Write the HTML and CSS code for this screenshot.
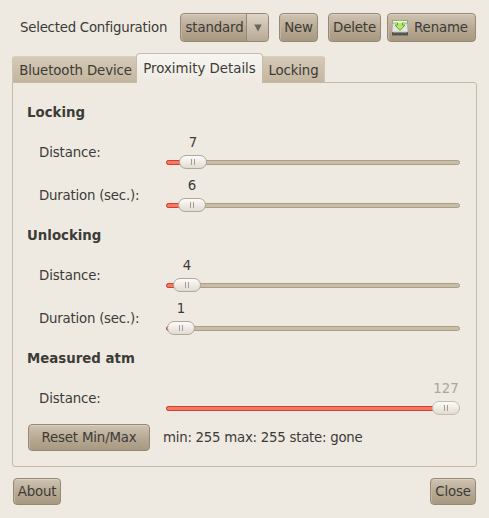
FILE: index.html
```html
<!DOCTYPE html>
<html lang="en">
<head>
<meta charset="utf-8">
<title>Proximity Details</title>
<link rel="stylesheet" href="styles.css">
</head>
<body>
<div class="window">
  <header class="toolbar">
    <span class="toolbar-label">Selected Configuration</span>
    <button class="btn combo"><span class="combo-text">standard</span><span class="combo-arrow"><svg width="8" height="8" viewBox="0 0 8 8"><path d="M0.3 0.5H7.7L4 7.5Z" fill="#6b6557"/></svg></span></button>
    <button class="btn new">New</button>
    <button class="btn delete">Delete</button>
    <button class="btn rename">
      <svg width="16" height="16" viewBox="0 0 16 16">
        <path d="M1 1H15L16 12H0Z" fill="#e4e7e1" stroke="#a9aaa5" stroke-width=".6"/>
        <path d="M0 12H16V15.5H0Z" fill="#55554f"/>
        <path d="M1 12.5H15" stroke="#8b8d88"/>
        <path d="M.5 .5H15.5V3H.5Z" fill="#f4ffe5" stroke="#6d9a3d" stroke-width=".7"/>
        <path d="M5.5 2.5H10.5V5H13L8 10.5L3 5H5.5Z" fill="#b5e869" stroke="#62a72a"/>
        <path d="M5.5 .8H10.5V3H5.5Z" fill="#e4f8c8"/>
      </svg>
      <span>Rename</span>
    </button>
  </header>

  <nav class="tabs">
    <div class="tab first">Bluetooth Device</div>
    <div class="tab active">Proximity Details</div>
    <div class="tab last">Locking</div>
  </nav>

  <main class="panel">
    <h2 class="h-lock">Locking</h2>
    <div class="row"><span class="label">Distance:</span>
      <div class="scale" style="--x:13px"><span class="value">7</span><div class="track"><i class="fill"></i><i class="thumb"></i></div></div></div>
    <div class="row"><span class="label duration">Duration (sec.):</span>
      <div class="scale" style="--x:12px"><span class="value">6</span><div class="track"><i class="fill"></i><i class="thumb"></i></div></div></div>
    <h2 class="h-unlock">Unlocking</h2>
    <div class="row"><span class="label">Distance:</span>
      <div class="scale" style="--x:7px"><span class="value">4</span><div class="track"><i class="fill"></i><i class="thumb"></i></div></div></div>
    <div class="row"><span class="label duration">Duration (sec.):</span>
      <div class="scale" style="--x:1px"><span class="value">1</span><div class="track"><i class="fill"></i><i class="thumb"></i></div></div></div>
    <h2 class="h-measured">Measured atm</h2>
    <div class="row"><span class="label">Distance:</span>
      <div class="scale disabled" style="--x:266px"><span class="value">127</span><div class="track"><i class="fill"></i><i class="thumb"></i></div></div></div>
    <div class="reset-row"><button class="btn reset">Reset Min/Max</button><span class="status">min: 255 max: 255 state: gone</span></div>
  </main>

  <footer class="footer">
    <button class="btn about">About</button>
    <button class="btn close">Close</button>
  </footer>
</div>
</body>
</html>
```
FILE: styles.css
```css
* { box-sizing: border-box; }
body {
  margin: 0;
  background: #eeeae2;
  color: #3c3b37;
  font: 13.33px/17px "DejaVu Sans", sans-serif;
}
.window {
  width: 489px;
  height: 518px;
  padding: 13px 12px;
  display: flex;
  flex-direction: column;
  overflow: hidden;
}
.toolbar { display: flex; height: 29px; align-items: center; padding-left: 8px; white-space: nowrap; }
.toolbar-label { width: 160px; letter-spacing: -0.24px; }
.btn {
  height: 29px;
  padding: 0;
  border: 1px solid #958875;
  border-radius: 4px;
  background: linear-gradient(#cfc3b3, #b9aa95 50%, #a79880);
  box-shadow: inset 0 1px #dbd1c3, inset 1px 0 #c3b6a3;
  color: #3c3b37;
  font: inherit;
  letter-spacing: -0.15px;
  white-space: nowrap;
  display: flex;
  align-items: center;
  justify-content: center;
}
.combo { width: 89px; margin-right: 10px; overflow: hidden; }
.combo-text { flex: 1; padding-left: 2px; }
.combo-arrow {
  width: 22px;
  height: 27px;
  border-left: 1px solid #958875;
  display: flex;
  align-items: center;
  justify-content: center;
  background: linear-gradient(#ded5c8, #b7a994);
}
.new { width: 39px; margin-right: 10px; }
.delete { width: 53px; margin-right: 6px; }
.rename { width: 89px; gap: 6px; padding-right: 3px; }

.tabs { display: flex; height: 30px; margin-top: 11px; align-items: flex-end; position: relative; z-index: 1; white-space: nowrap; }
.tab {
  height: 26px;
  margin-bottom: 1px;
  background: linear-gradient(#d5cab7, #c4b69e);
  border-top: 1px solid #d8cfbf;
  line-height: 27px;
  text-align: center;
}
.tab.first { width: 124px; padding-left: 2px; border-left: 1px solid #cfc5b4; border-radius: 3px 0 0; letter-spacing: -0.12px; }
.tab.active {
  width: 127px;
  height: 30px;
  margin-bottom: 0;
  border: 1px solid #c7bcaa;
  border-bottom: 0;
  border-radius: 4px 4px 0 0;
  background: linear-gradient(#f7f5f1, #eeeae2);
  line-height: 29px;
}
.tab.last { width: 62px; border-right: 1px solid #cfc5b4; border-radius: 0 3px 0 0; letter-spacing: -0.15px; }

.panel {
  height: 385px;
  margin-top: -1px;
  padding: 11px 16px 0 14px;
  border: 1px solid #c5baa8;
  border-radius: 0 3px 3px 3px;
}
h2 { height: 37px; margin: 0; font-size: 13.33px; line-height: 37px; }
.row { display: flex; height: 43px; }
.label { width: 139px; padding-left: 12px; line-height: 43px; letter-spacing: -0.12px; white-space: nowrap; }
.duration { letter-spacing: -0.22px; }
.scale { width: 294px; padding-top: 3px; }
.value { display: block; width: 28px; margin-left: var(--x); text-align: center; line-height: 17px; }
.track {
  height: 5px;
  margin-top: 9px;
  border: 1px solid #a99f87;
  border-radius: 3px;
  background: #c9bda5;
  position: relative;
}
.fill {
  position: absolute;
  left: -1px;
  top: -1px;
  width: calc(var(--x) + 4px);
  height: 5px;
  border: 1px solid #c54436;
  border-radius: 3px 0 0 3px;
  background: #fa7661;
}
.thumb {
  position: absolute;
  left: calc(var(--x) - 1px);
  top: -6px;
  width: 28px;
  height: 14px;
  border: 1px solid #b0a899;
  border-radius: 7px;
  background: linear-gradient(90deg, #a39d91 1px, transparent 1px 3px, #a39d91 3px) center 3px / 4px 6px no-repeat, linear-gradient(#fcfbf9, #e1dcd2);
}
.disabled .value { color: #aaa69d; }
.disabled .thumb { border-color: #c5beb1; }
.reset-row { display: flex; align-items: center; height: 27px; margin: 4px 0 0 1px; white-space: nowrap; }
.reset-row .btn, .footer .btn { height: 27px; }
.reset { width: 122px; margin-right: 13px; }
.status { letter-spacing: -0.25px; }
.footer { display: flex; justify-content: space-between; margin-top: 11px; padding: 0 1px; }
.about { width: 48px; }
.close { width: 46px; }
```
